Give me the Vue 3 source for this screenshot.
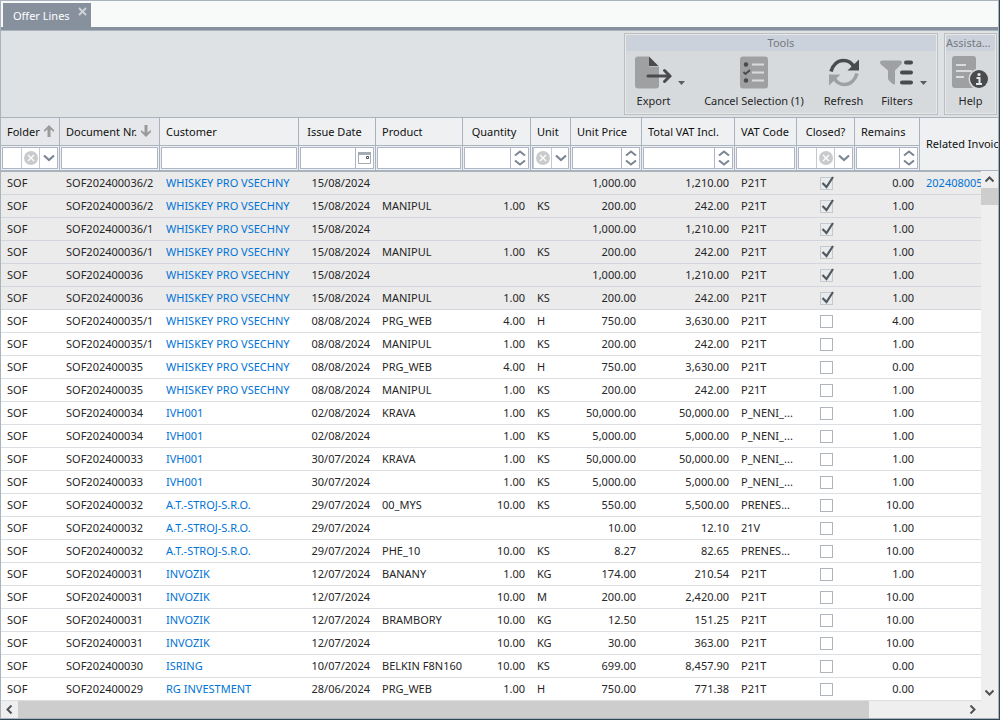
<script setup>
const columns = [
  { key: 'folder', label: 'Folder', width: 59, filter: 'select', sort: 'up' },
  { key: 'doc', label: 'Document Nr.', width: 100, filter: 'text', sort: 'down' },
  { key: 'customer', label: 'Customer', width: 139, filter: 'text' },
  { key: 'date', label: 'Issue Date', width: 77, filter: 'date', head: 'mid', cell: 'num' },
  { key: 'product', label: 'Product', width: 87, filter: 'text' },
  { key: 'qty', label: 'Quantity', width: 68, filter: 'number', head: 'mid', cell: 'num' },
  { key: 'unit', label: 'Unit', width: 40, filter: 'select' },
  { key: 'price', label: 'Unit Price', width: 71, filter: 'number', cell: 'num' },
  { key: 'total', label: 'Total VAT Incl.', width: 93, filter: 'number', cell: 'num' },
  { key: 'vat', label: 'VAT Code', width: 62, filter: 'text' },
  { key: 'closed', label: 'Closed?', width: 58, filter: 'select', head: 'center', cell: 'center' },
  { key: 'remains', label: 'Remains', width: 65, filter: 'number', cell: 'num' },
]

const W = 'WHISKEY PRO VSECHNY'
const A = 'A.T.-STROJ-S.R.O.'
const rows = [
  ['36/2', W, '15/08/2024', '', '', '', '1,000.00', '1,210.00', 'P21T', 1, '0.00', '202408005'],
  ['36/2', W, '15/08/2024', 'MANIPUL', '1.00', 'KS', '200.00', '242.00', 'P21T', 1, '1.00'],
  ['36/1', W, '15/08/2024', '', '', '', '1,000.00', '1,210.00', 'P21T', 1, '1.00'],
  ['36/1', W, '15/08/2024', 'MANIPUL', '1.00', 'KS', '200.00', '242.00', 'P21T', 1, '1.00'],
  ['36', W, '15/08/2024', '', '', '', '1,000.00', '1,210.00', 'P21T', 1, '1.00'],
  ['36', W, '15/08/2024', 'MANIPUL', '1.00', 'KS', '200.00', '242.00', 'P21T', 1, '1.00'],
  ['35/1', W, '08/08/2024', 'PRG_WEB', '4.00', 'H', '750.00', '3,630.00', 'P21T', 0, '4.00'],
  ['35/1', W, '08/08/2024', 'MANIPUL', '1.00', 'KS', '200.00', '242.00', 'P21T', 0, '1.00'],
  ['35', W, '08/08/2024', 'PRG_WEB', '4.00', 'H', '750.00', '3,630.00', 'P21T', 0, '0.00'],
  ['35', W, '08/08/2024', 'MANIPUL', '1.00', 'KS', '200.00', '242.00', 'P21T', 0, '1.00'],
  ['34', 'IVH001', '02/08/2024', 'KRAVA', '1.00', 'KS', '50,000.00', '50,000.00', 'P_NENI_...', 0, '1.00'],
  ['34', 'IVH001', '02/08/2024', '', '1.00', 'KS', '5,000.00', '5,000.00', 'P_NENI_...', 0, '1.00'],
  ['33', 'IVH001', '30/07/2024', 'KRAVA', '1.00', 'KS', '50,000.00', '50,000.00', 'P_NENI_...', 0, '1.00'],
  ['33', 'IVH001', '30/07/2024', '', '1.00', 'KS', '5,000.00', '5,000.00', 'P_NENI_...', 0, '1.00'],
  ['32', A, '29/07/2024', '00_MYS', '10.00', 'KS', '550.00', '5,500.00', 'PRENES...', 0, '10.00'],
  ['32', A, '29/07/2024', '', '', '', '10.00', '12.10', '21V', 0, '1.00'],
  ['32', A, '29/07/2024', 'PHE_10', '10.00', 'KS', '8.27', '82.65', 'PRENES...', 0, '10.00'],
  ['31', 'INVOZIK', '12/07/2024', 'BANANY', '1.00', 'KG', '174.00', '210.54', 'P21T', 0, '1.00'],
  ['31', 'INVOZIK', '12/07/2024', '', '10.00', 'M', '200.00', '2,420.00', 'P21T', 0, '10.00'],
  ['31', 'INVOZIK', '12/07/2024', 'BRAMBORY', '10.00', 'KG', '12.50', '151.25', 'P21T', 0, '10.00'],
  ['31', 'INVOZIK', '12/07/2024', '', '10.00', 'KG', '30.00', '363.00', 'P21T', 0, '10.00'],
  ['30', 'ISRING', '10/07/2024', 'BELKIN F8N160', '10.00', 'KS', '699.00', '8,457.90', 'P21T', 0, '0.00'],
  ['29', 'RG INVESTMENT', '28/06/2024', 'PRG_WEB', '1.00', 'H', '750.00', '771.38', 'P21T', 0, '0.00'],
].map(([n, customer, date, product, qty, unit, price, total, vat, closed, remains, invoice]) => ({
  folder: 'SOF', doc: 'SOF2024000' + n, customer, date, product, qty, unit, price, total, vat,
  closed: !!closed, remains, invoice,
}))
</script>

<template>
  <div class="window">
    <div class="frame">
      <nav class="tabs">
        <div class="tab">
          <a href="#">Offer Lines</a>
          <button class="close" aria-label="Close tab">
            <svg width="9" height="9" viewBox="0 0 9 9"><path d="M1 1l7 7M8 1l-7 7" stroke="#cdd3d9" stroke-width="1.8" /></svg>
          </button>
        </div>
      </nav>

      <header class="ribbon">
        <section class="group tools">
          <h2>Tools</h2>
          <div class="actions">
            <button class="action export">
              <svg class="icon" width="38" height="32" viewBox="0 0 38 32">
                <path d="M3 0h11v10h10v19a3 3 0 0 1-3 3H3a3 3 0 0 1-3-3V3a3 3 0 0 1 3-3z" fill="#9fa0a1" />
                <path d="M14 0l9.500 9.500H14z" fill="#4a4b4c" />
                <path d="M13 19.500h22M29.500 14l5.500 5.500-5.500 5.500" fill="none" stroke="#4a4b4c" stroke-width="3" stroke-linecap="round" />
              </svg>
              <span>Export</span>
            </button>
            <button class="drop" aria-label="Export options"><svg width="7" height="4" viewBox="0 0 7 4"><path d="M0 0h7L3.500 4z" fill="#5a5d60" /></svg></button>
            <button class="action cancel">
              <svg class="icon" width="28" height="32" viewBox="0 0 28 32">
                <rect width="28" height="32" rx="3" fill="#9fa0a1" />
                <circle cx="6" cy="8" r="2.200" fill="#4a4b4c" />
                <circle cx="6" cy="24" r="2.200" fill="#4a4b4c" />
                <path d="M3.500 15.500l2 2 4.500-4" fill="none" stroke="#4a4b4c" stroke-width="1.800" />
                <path d="M12 8h12M12 16h12M12 24h12" stroke="#d9dbdd" stroke-width="2" />
              </svg>
              <span>Cancel Selection (1)</span>
            </button>
            <button class="action refresh">
              <svg class="icon" width="32" height="32" viewBox="0 0 32 32">
                <path d="M3 15C5 8 10 4 15.500 4c4.500 0 8 2 10 6" fill="none" stroke="#4a4b4c" stroke-width="3.600" />
                <path d="M31 3v11H19.500z" fill="#4a4b4c" />
                <path d="M29 17c-2 7-7 11-12.500 11-4.500 0-8-2-10-6" fill="none" stroke="#9fa0a1" stroke-width="3.600" />
                <path d="M1 29V18h11.500z" fill="#9fa0a1" />
              </svg>
              <span>Refresh</span>
            </button>
            <button class="action filters">
              <svg class="icon" width="34" height="32" viewBox="0 0 34 32">
                <path d="M2 4h18q2 0 2 2 0 1-1 2l-6 6v13q0 1-1 1-1 0-5-4-1-1-1-2v-8L1 8Q0 7 0 6q0-2 2-2z" fill="#9fa0a1" />
                <path d="M26 6h5M22 16h9M22 26h9" stroke="#4a4b4c" stroke-width="4" stroke-linecap="round" />
              </svg>
              <span>Filters</span>
            </button>
            <button class="drop" aria-label="Filter options"><svg width="7" height="4" viewBox="0 0 7 4"><path d="M0 0h7L3.500 4z" fill="#5a5d60" /></svg></button>
          </div>
        </section>
        <section class="group assistance">
          <h2>Assistance</h2>
          <div class="actions">
            <button class="action help">
              <svg class="icon" width="37" height="33" viewBox="0 0 37 33">
                <rect width="24" height="32" rx="3" fill="#9fa0a1" />
                <path d="M4 9h10M4 15h16M4 21h8" stroke="#d9dbdd" stroke-width="2" />
                <circle cx="27" cy="23" r="10.500" fill="#d7dadd" />
                <circle cx="27" cy="23" r="9" fill="#4a4b4c" />
                <circle cx="27" cy="18.500" r="1.600" fill="#e6e7e8" />
                <path d="M24.500 22H27.500v6M24 28h6" fill="none" stroke="#e6e7e8" stroke-width="2" />
              </svg>
              <span>Help</span>
            </button>
          </div>
        </section>
      </header>

      <main class="grid">
        <table>
          <colgroup>
            <col v-for="c in columns" :key="c.key" :style="{ width: c.width + 'px' }" />
            <col />
          </colgroup>
          <thead>
            <tr class="titles">
              <th v-for="c in columns" :key="c.key" scope="col" :class="[c.head, { sorted: c.sort }]">
                {{ c.label }}<svg v-if="c.sort" class="sort" width="10" height="12" viewBox="0 0 10 12">
                  <path v-if="c.sort === 'up'" d="M5 0l5 5v2L6.500 4.500V12h-3V4.500L0 7V5z" fill="#999b9d" />
                  <path v-else d="M5 12L0 7V5l3.500 2.500V0h3v7.500L10 5v2z" fill="#999b9d" />
                </svg>
              </th>
              <th scope="col" rowspan="2" class="last">Related Invoices</th>
            </tr>
            <tr class="filter-row">
              <td v-for="c in columns" :key="c.key">
                <div v-if="c.filter === 'select'" class="field combo">
                  <select :aria-label="'Filter ' + c.label"><option></option></select>
                  <button class="clear" aria-label="Clear filter">
                    <svg width="14" height="14" viewBox="0 0 14 14"><circle cx="7" cy="7" r="7" fill="#c9cacb" /><path d="M4 4l6 6M10 4l-6 6" stroke="#fff" stroke-width="1.300" /></svg>
                  </button>
                  <span class="arrow"><svg width="12" height="8" viewBox="0 0 12 8"><path d="M1 1.500l5 4.500 5-4.500" fill="none" stroke="#7c8693" stroke-width="2.200" /></svg></span>
                </div>
                <div v-else class="field">
                  <input type="text" :aria-label="'Filter ' + c.label" />
                  <button v-if="c.filter === 'date'" class="side" aria-label="Pick a date">
                    <svg width="13" height="12" viewBox="0 0 13 12"><path d="M.5.5h12v11H.5z" fill="#fff" stroke="#a5abb2" /><path d="M0 0h13v3H0z" fill="#a5abb2" /><path d="M8.500 4.500h2v2h-2z" fill="none" stroke="#4a4f57" /></svg>
                  </button>
                  <div v-if="c.filter === 'number'" class="side spin">
                    <button aria-label="Increase"><svg width="12" height="6" viewBox="0 0 12 6"><path d="M1 5.500l5-4 5 4" fill="none" stroke="#7c8693" stroke-width="2" /></svg></button>
                    <button aria-label="Decrease"><svg width="12" height="6" viewBox="0 0 12 6"><path d="M1 .5l5 4 5-4" fill="none" stroke="#7c8693" stroke-width="2" /></svg></button>
                  </div>
                </div>
              </td>
            </tr>
          </thead>
          <tbody>
            <tr v-for="(r, i) in rows" :key="i" :class="{ shut: r.closed }">
              <td v-for="c in columns" :key="c.key" :class="c.cell">
                <a v-if="c.key === 'customer'" href="#">{{ r.customer }}</a>
                <label v-else-if="c.key === 'closed'" class="check">
                  <input type="checkbox" :checked="r.closed" :aria-label="'Closed ' + r.doc" />
                  <svg v-if="r.closed" width="13" height="14" viewBox="0 0 13 14"><path d="M1.500 7l4 4L12 1" fill="none" stroke="#505860" stroke-width="2.200" /></svg>
                </label>
                <template v-else>{{ r[c.key] }}</template>
              </td>
              <td><a v-if="r.invoice" href="#">{{ r.invoice }}</a></td>
            </tr>
          </tbody>
        </table>
        <div class="vscroll">
          <button aria-label="Scroll up"><svg width="9" height="7" viewBox="0 0 9 7"><path d="M.5 5.500l4-4 4 4" fill="none" stroke="#505356" stroke-width="2" /></svg></button>
          <div class="vtrack"><div class="vthumb"></div></div>
          <button aria-label="Scroll down"><svg width="9" height="7" viewBox="0 0 9 7"><path d="M.5 1.500l4 4 4-4" fill="none" stroke="#505356" stroke-width="2" /></svg></button>
        </div>
      </main>

      <div class="hscroll">
        <button aria-label="Scroll left"><svg width="7" height="9" viewBox="0 0 7 9"><path d="M5.500 .5l-4 4 4 4" fill="none" stroke="#505356" stroke-width="2" /></svg></button>
        <div class="htrack"><div class="hthumb"></div></div>
        <button aria-label="Scroll right"><svg width="7" height="9" viewBox="0 0 7 9"><path d="M1.500 .5l4 4-4 4" fill="none" stroke="#505356" stroke-width="2" /></svg></button>
      </div>
    </div>
  </div>
</template>

<style>
body { margin: 0; overflow: hidden; }
</style>

<style scoped>
* { box-sizing: border-box; }
.window {
  height: 100vh;
  border: solid #2f4552;
  border-width: 0 1px 1px 0;
  font: 11px/16px "Noto Sans", "Open Sans", sans-serif;
  color: #262626;
}
.frame {
  height: 100%;
  display: flex;
  flex-direction: column;
  border: 1px solid #a9b3bd;
}
button { border: 0; padding: 0; margin: 0; background: none; font: inherit; color: inherit; display: flex; align-items: center; justify-content: center; }
a { color: #0073d6; text-decoration: none; }

.tabs { flex: none; height: 30px; padding: 2px 2px 0; background: #f8faf9; border-bottom: 1px solid #a9b3bd; box-shadow: inset 0 -3px #87919e; }
.tab { display: inline-flex; height: 27px; width: 88px; padding-left: 10px; background: #87919e; justify-content: space-between; align-items: flex-start; }
.tab a { color: #fff; padding-top: 5px; white-space: nowrap; }
.close { padding: 4px 4px 0 0; }

.ribbon { flex: none; height: 87px; padding: 2px 1px 2px 0; display: flex; justify-content: flex-end; gap: 6px; background: #dfe2e5; border-bottom: 1px solid #a9b3bd; }
.group { height: 82px; padding: 1px; background: #d7dadd; border: 1px solid #bcbec0; box-shadow: inset 0 0 0 1px #e6e8ea; }
.tools { width: 314px; }
.assistance { width: 53px; }
.group h2 { margin: 0; height: 16px; font-size: 11px; font-weight: 400; text-align: center; color: #74797f; background: #ccd2db; overflow: hidden; text-overflow: ellipsis; white-space: nowrap; }
.assistance h2 { text-align: left; }
.actions { display: flex; height: 62px; padding-top: 5px; }
.tools .actions { padding-left: 3px; }
.actions button { flex: none; }
.action { flex-direction: column; justify-content: flex-start; white-space: nowrap; }
.action .icon { flex: none; height: 33px; }
.action span { margin-top: 4px; }
.export { width: 49px; }
.drop { width: 7px; height: 54px; }
.cancel { width: 138px; }
.refresh { width: 41px; }
.actions .filters { width: 46px; margin-left: 10px; }
.help { width: 49px; }

.grid { flex: 1; min-height: 0; overflow: hidden; position: relative; background: #fff; }
table { width: 100%; table-layout: fixed; border-collapse: separate; border-spacing: 0; }
th, td { padding: 0 6px; overflow: hidden; white-space: nowrap; }
thead { background: #eef0f2; color: #111; }
th { height: 28px; font-weight: 400; text-align: left; border: solid #a9b3bd; border-width: 0 1px 1px 0; }
th.sorted { background: #e5e7ea; padding-right: 0; }
th.mid { text-align: center; padding-right: 11px; }
th.center, td.center { text-align: center; padding: 0; }
th.last { border-right: 0; border-bottom-width: 2px; padding-right: 0; }
.sort { margin-left: 4px; vertical-align: -1px; }
.filter-row td { height: 26px; padding: 1px; border: solid #a9b3bd; border-width: 0 1px 2px 0; }
.field { display: flex; height: 22px; background: #fff; border: 1px solid #aeb5c6; }
.field input { flex: 1; min-width: 0; width: 0; border: 0; padding: 0 3px; margin: 0; background: none; font: inherit; }
.combo { display: grid; grid-template-columns: minmax(0, 1fr) 18px 18px; }
.combo select { grid-area: 1 / 1 / 2 / 4; min-width: 0; width: 100%; height: 20px; appearance: none; border: 0; padding: 0; margin: 0; background: none; font: inherit; }
.clear { grid-area: 1 / 2; border-left: 1px solid #c3c8d3; }
.arrow { grid-area: 1 / 3; display: flex; align-items: center; justify-content: center; border-left: 1px solid #c3c8d3; pointer-events: none; }
.side { width: 18px; border-left: 1px solid #aeb5c6; }
.spin { display: flex; flex-direction: column; justify-content: center; gap: 4px; }

tbody td { height: 23px; border-bottom: 1px solid #dcdee3; }
.shut td { background: #ebebeb; border-bottom-color: #d3d6dd; }
.num { text-align: right; }
.check { position: relative; display: flex; width: 13px; height: 13px; margin: 0 auto; }
.check input { appearance: none; width: 13px; height: 13px; margin: 0; border: 1px solid #aeb5bd; background: #fff; }
.shut .check input { background: #e9ebec; border-color: #c3c9ce; }
.check svg { position: absolute; left: 1px; top: -1px; pointer-events: none; }

.vscroll { position: absolute; top: 53px; right: 0; bottom: 0; width: 17px; display: flex; flex-direction: column; background: #efefef; }
.vscroll button { height: 17px; width: 17px; }
.vtrack { flex: 1; }
.vthumb { height: 17px; background: #cdcdcd; }
.hscroll { flex: none; height: 17px; padding-right: 17px; display: flex; background: #efefef; }
.hscroll button { width: 17px; height: 17px; }
.htrack { flex: 1; }
.hthumb { height: 17px; width: 90%; background: #cdcdcd; }
</style>
